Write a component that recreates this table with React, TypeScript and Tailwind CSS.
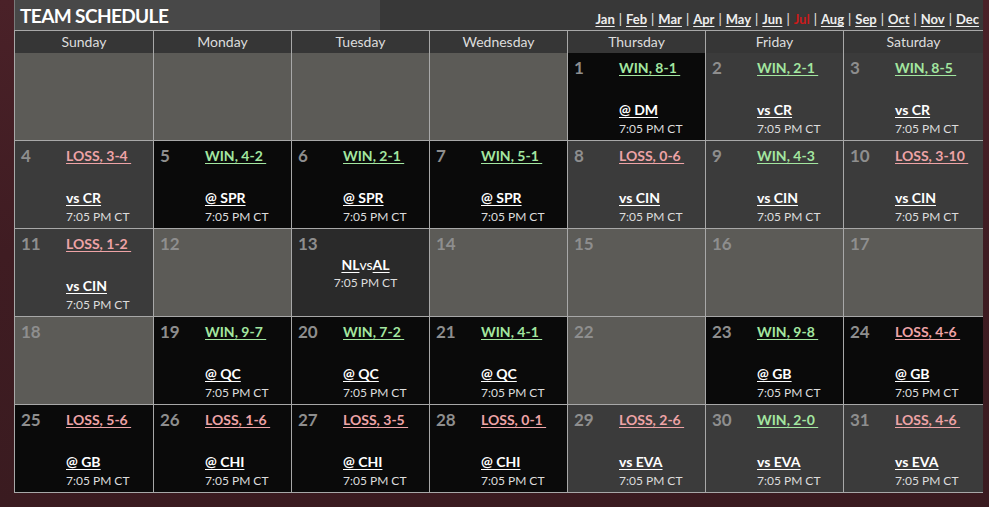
import React from "react";

type Day =
  | { kind: "empty" }
  | { kind: "off"; d: number }
  | { kind: "star"; d: number }
  | { kind: "game"; d: number; w: boolean; s: string; o: string };

const g = (d: number, w: boolean, s: string, o: string): Day => ({ kind: "game", d, w, s, o });
const off = (d: number): Day => ({ kind: "off", d });
const E: Day = { kind: "empty" };

const days: Day[] = [
  E, E, E, E, g(1, true, "8-1", "@ DM"), g(2, true, "2-1", "vs CR"), g(3, true, "8-5", "vs CR"),
  g(4, false, "3-4", "vs CR"), g(5, true, "4-2", "@ SPR"), g(6, true, "2-1", "@ SPR"), g(7, true, "5-1", "@ SPR"), g(8, false, "0-6", "vs CIN"), g(9, true, "4-3", "vs CIN"), g(10, false, "3-10", "vs CIN"),
  g(11, false, "1-2", "vs CIN"), off(12), { kind: "star", d: 13 }, off(14), off(15), off(16), off(17),
  off(18), g(19, true, "9-7", "@ QC"), g(20, true, "7-2", "@ QC"), g(21, true, "4-1", "@ QC"), off(22), g(23, true, "9-8", "@ GB"), g(24, false, "4-6", "@ GB"),
  g(25, false, "5-6", "@ GB"), g(26, false, "1-6", "@ CHI"), g(27, false, "3-5", "@ CHI"), g(28, false, "0-1", "@ CHI"), g(29, false, "2-6", "vs EVA"), g(30, true, "2-0", "vs EVA"), g(31, false, "4-6", "vs EVA"),
];

const months = ["Jan", "Feb", "Mar", "Apr", "May", "Jun", "Jul", "Aug", "Sep", "Oct", "Nov", "Dec"];
const dayNames = ["Sunday", "Monday", "Tuesday", "Wednesday", "Thursday", "Friday", "Saturday"];

const font = { fontFamily: "Lato, 'Noto Sans', sans-serif" };

function Num({ d }: { d: number }) {
  return <div className="w-[51px] shrink-0 pl-[6px] pt-[5px] text-[17px] font-bold leading-[20px] text-[#8e8e8e]">{d}</div>;
}

function Cell({ day }: { day: Day }) {
  if (day.kind === "empty") return <div className="h-[87px] bg-[#5c5b57]" />;
  if (day.kind === "off")
    return (
      <div className="flex h-[87px] bg-[#5c5b57]">
        <Num d={day.d} />
      </div>
    );
  if (day.kind === "star")
    return (
      <div className="relative h-[87px] bg-[#2a2a2a]">
        <Num d={day.d} />
        <div className="absolute left-0 right-0 top-[27px] flex flex-col items-center pl-[10px]">
          <div className="text-[14px] leading-[17px] text-white">
            <span className="font-bold underline underline-offset-2">NL</span>
            <span>vs</span>
            <span className="font-bold underline underline-offset-2">AL</span>
          </div>
          <div className="mt-[2px] text-[12px] leading-[15px] text-[#dddddd]">7:05 PM CT</div>
        </div>
      </div>
    );
  const away = day.o.startsWith("@");
  return (
    <div className={`flex h-[87px] ${away ? "bg-[#0a0a0a]" : "bg-[#3b3b3b]"}`}>
      <Num d={day.d} />
      <div className="flex flex-1 flex-col pt-[6px] pb-[4px]">
        <div
          className={`text-[14px] font-bold leading-[17px] underline underline-offset-2 whitespace-pre ${
            day.w ? "text-[#a3e6a0]" : "text-[#eea3a6]"
          }`}
        >
          {(day.w ? "WIN, " : "LOSS, ") + day.s + " "}
        </div>
        <div className="mt-auto text-[14px] font-bold leading-[17px] text-white underline underline-offset-2">{day.o}</div>
        <div className="mt-[3px] text-[12px] leading-[15px] text-[#dddddd]">7:05 PM CT</div>
      </div>
    </div>
  );
}

export default function App() {
  return (
    <div
      className="h-[507px] w-[989px] overflow-hidden bg-[linear-gradient(180deg,#4a2128_0%,#3f1c22_50%,#3a1b20_100%)] pl-[14px]"
      style={font}
    >
      <div className="w-[969px]">
        <div className="flex h-[30px] border-l border-[#7a7a7a]">
          <div className="flex w-[365px] items-center bg-[#484848] pl-[5px] pt-[1px] text-[19px] font-bold leading-none tracking-[-0.6px] text-white">
            TEAM SCHEDULE
          </div>
          <div className="flex flex-1 items-end justify-end bg-[#383838] pb-[3px] pr-[4px] text-[13px] font-bold leading-[16px] text-[#eeeeee]">
            {months.map((m, i) => (
              <React.Fragment key={m}>
                {i > 0 && <span className="px-[4px] font-normal">|</span>}
                <span className={m === "Jul" ? "text-[#cc1a1a]" : "underline underline-offset-2"}>{m}</span>
              </React.Fragment>
            ))}
          </div>
        </div>
        <div className="h-px bg-[#a8a8a8]" />
        <div className="grid grid-cols-[138px_137px_137px_137px_137px_137px_139px] gap-x-px bg-[#a8a8a8] px-px">
          {dayNames.map((n) => (
            <div key={n} className="flex h-[22px] items-center justify-center bg-[#363636] text-[14px] leading-none text-[#dddddd]">
              {n}
            </div>
          ))}
        </div>
        <div className="grid grid-cols-[138px_137px_137px_137px_137px_137px_139px] gap-px bg-[#a8a8a8] px-px pb-px">
          {days.map((d, i) => (
            <Cell key={i} day={d} />
          ))}
        </div>
      </div>
    </div>
  );
}
